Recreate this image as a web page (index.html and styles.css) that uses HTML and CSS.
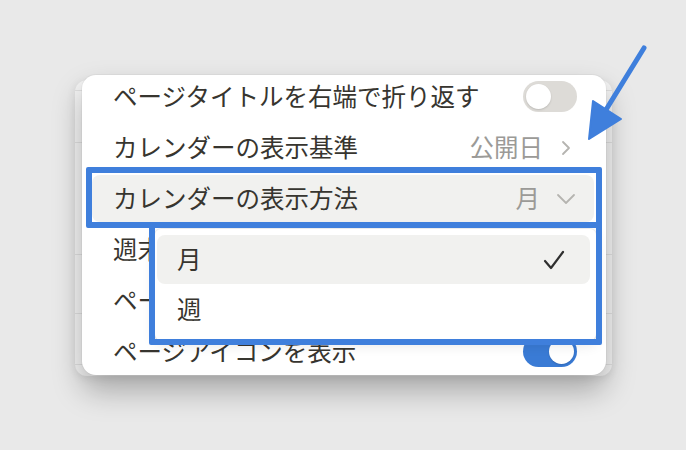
FILE: index.html
```html
<!DOCTYPE html>
<html lang="ja">
	<head>
		<meta charset="utf-8">
		<title>カレンダーの表示方法</title>
		<link rel="stylesheet" href="styles.css">
	</head>
	<body>
		<div class="stage">
			<!-- window behind the menu -->
			<div class="backdrop">
				<div class="bd-line h10"></div>
				<div class="bd-line h52"></div>
				<div class="bd-line h112"></div>
				<div class="bd-line h59"></div>
				<div class="bd-line h51"></div>
			</div>

			<div class="menu">
				<div class="rows">
					<div class="row">
						<span class="label">ページタイトルを右端で折り返す</span>
						<span class="toggle"><span class="knob"></span></span>
					</div>
					<div class="row">
						<span class="label">カレンダーの表示基準</span>
						<span class="value">公開日</span>
						<svg class="chev-right" width="10" height="16" viewBox="0 0 10 16"><polyline points="2,2 8,8 2,14"/></svg>
					</div>
					<div class="row active">
						<span class="label">カレンダーの表示方法</span>
						<span class="value">月</span>
						<svg class="chev-down" width="20" height="12" viewBox="0 0 20 12"><polyline points="2,2 10,10 18,2"/></svg>
					</div>
					<div class="row">
						<span class="label">週末を表示</span>
					</div>
					<div class="row">
						<span class="label">ページを開く</span>
					</div>
					<div class="row">
						<span class="label">ページアイコンを表示</span>
						<span class="toggle on"><span class="knob"></span></span>
					</div>
				</div>
			</div>

			<!-- dropdown and highlight marks -->
			<div class="popup">
				<div class="option selected">
					<span>月</span>
					<svg class="check" width="22" height="22" viewBox="0 0 22 22"><polyline points="2,12 8,19 20,3"/></svg>
				</div>
				<div class="option">
					<span>週</span>
				</div>
			</div>
			<div class="mark mark-row"></div>
			<div class="mark mark-list"></div>

			<svg class="arrow" width="686" height="450" viewBox="0 0 686 450">
				<line x1="644" y1="48" x2="604" y2="113"/>
				<polygon points="589,139 593,101 621,119"/>
			</svg>
		</div>
	</body>
</html>
```

FILE: styles.css
```css
html, body {
	margin:0;
	padding:0;
}
body {
	background-color:#e9e9e9;
	color:#37352f;
	font-family:"Noto Sans CJK JP", "Noto Sans", sans-serif;
	font-size:24.5px;
}
.stage {
	position:relative;
	width:686px;
	height:450px;
	overflow:hidden;
}

/* window behind */
.backdrop {
	position:absolute;
	left:75px;
	top:80px;
	width:537px;
	height:296px;
	background-color:#f4f4f4;
	border-radius:12px;
	display:flex;
	flex-direction:column;
	box-shadow:0 2px 10px rgba(0,0,0,0.08);
}
.bd-line {
	border-bottom:1px solid #e0e0e0;
	flex:none;
}
.h10 { height:10px; }
.h52 { height:51px; }
.h112 { height:111px; }
.h59 { height:58px; }
.h51 { height:50px; }

/* menu */
.menu {
	position:absolute;
	left:82px;
	top:75px;
	width:524px;
	height:300px;
	background-color:#fff;
	border-radius:14px;
	overflow:hidden;
	box-shadow:0 16px 30px rgba(0,0,0,0.28), 0 0 0 1px rgba(0,0,0,0.03);
}
.rows {
	display:flex;
	flex-direction:column;
	gap:4px;
	margin-top:-2px;
}
.row {
	display:flex;
	align-items:center;
	height:47px;
	margin:0 12px 0 10px;
	padding:0 20px 0 21px;
	border-radius:8px;
	line-height:1;
	white-space:nowrap;
}
.row.active {
	background-color:#f1f1ef;
}
.label {
	flex:1;
}
.value {
	color:#9b9a97;
	margin-right:18px;
}
.chev-right polyline,
.chev-down polyline {
	fill:none;
	stroke:#b5b4b0;
	stroke-width:1.8;
	stroke-linecap:round;
	stroke-linejoin:round;
}
.chev-right {
	margin-right:3px;
}
.chev-down {
	margin-left:-2px;
	margin-right:-2px;
}

.toggle {
	position:relative;
	width:54px;
	height:31px;
	border-radius:16px;
	background-color:#dddbd7;
	flex:none;
	margin-right:-3px;
}
.toggle .knob {
	position:absolute;
	left:3px;
	top:3px;
	width:25px;
	height:25px;
	border-radius:50%;
	background-color:#fff;
	box-shadow:0 1px 2px rgba(0,0,0,0.15);
}
.toggle.on {
	background-color:#3a7bd5;
}
.toggle.on .knob {
	left:26px;
}

/* dropdown */
.popup {
	position:absolute;
	left:155px;
	top:229px;
	width:441px;
	height:111px;
	box-sizing:border-box;
	padding:6px 6px 0 2px;
	background-color:#fff;
	border-radius:6px;
	box-shadow:0 0 0 1px rgba(0,0,0,0.05), 0 4px 14px rgba(0,0,0,0.12);
	display:flex;
	flex-direction:column;
	gap:1px;
}
.option {
	display:flex;
	align-items:center;
	justify-content:space-between;
	height:49px;
	padding:0 25px 0 20px;
	border-radius:8px;
	line-height:1;
}
.option.selected {
	background-color:#f1f1ef;
}
.check polyline {
	fill:none;
	stroke:#2f2f2f;
	stroke-width:2.2;
	stroke-linecap:round;
	stroke-linejoin:round;
}

.mark {
	position:absolute;
	border:6px solid #3f7fdc;
	box-sizing:border-box;
	border-radius:2px;
}
.mark-row {
	left:86px;
	top:167px;
	width:516px;
	height:61px;
}
.mark-list {
	left:149px;
	top:222px;
	width:453px;
	height:123px;
}

.arrow {
	position:absolute;
	left:0;
	top:0;
}
.arrow line {
	stroke:#3f7fdc;
	stroke-width:5;
	stroke-linecap:round;
}
.arrow polygon {
	fill:#3f7fdc;
	stroke:#3f7fdc;
	stroke-width:2;
	stroke-linejoin:round;
}
```
